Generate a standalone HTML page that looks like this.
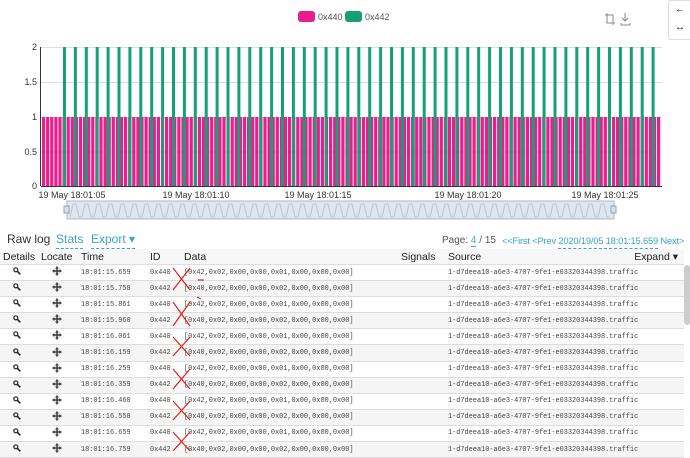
<!DOCTYPE html>
<html><head><meta charset="utf-8"><style>
body{margin:0;width:690px;height:451px;overflow:hidden;background:#fff;font-family:"Liberation Sans",sans-serif;position:relative}
.abs{position:absolute}
.lg{font-size:9px;color:#555}
table{border-collapse:collapse;position:absolute;left:0;top:249px;width:684px;font-size:11px;table-layout:fixed}
th{font-weight:normal;text-align:left;color:#222;height:15px;padding:0 0 0 3px;background:#f7f7f7;border-bottom:1px solid #ddd;font-size:10.5px;white-space:nowrap}
td{height:15.1px;padding:0 0 0 3px;border-bottom:1px solid #ddd;font-family:"Liberation Mono",monospace;font-size:6.9px;color:#444;white-space:nowrap;overflow:hidden}
tr:nth-child(even) td{background:#f5f5f5}
.lnk{color:#3aa3c9}
.dot{border-bottom:1px dashed #3aa3c9;padding-bottom:2px}
</style></head><body>
<div class="abs" style="left:298px;top:11px;width:17px;height:11px;background:#e91e8c;border-radius:3px"></div>
<div class="abs lg" style="left:318px;top:12px">0x440</div>
<div class="abs" style="left:345px;top:11px;width:17px;height:11px;background:#17a077;border-radius:3px"></div>
<div class="abs lg" style="left:365px;top:12px">0x442</div>
<svg class="abs" style="left:600px;top:10px" width="40" height="16" stroke="#888" fill="none" stroke-width="1">
<path d="M7 3 V13 H15 M5 5 H13 V15"/><path d="M25 3 V11 M22 8 L25 11 L28 8 M21 13 V15 H30 V13"/></svg>
<div class="abs" style="left:668px;top:0;width:22px;height:38px;border:1px solid #ddd;border-radius:3px;background:#fff;font-size:10px;text-align:center;line-height:18px">←<br>↔</div>
<svg class="abs" style="left:0;top:0" width="690" height="230">
<g stroke="#ddd" stroke-width="1"><line x1="41" y1="47.5" x2="662" y2="47.5"/><line x1="41" y1="82.5" x2="662" y2="82.5"/><line x1="41" y1="117.5" x2="662" y2="117.5"/><line x1="41" y1="152" x2="662" y2="152"/></g>
<g id="bars"></g>
<line x1="41" y1="186.5" x2="662" y2="186.5" stroke="#333"/>
<line x1="40.5" y1="47" x2="40.5" y2="186" stroke="#333"/>
<g fill="#333" font-size="9" font-family="Liberation Sans" text-anchor="end">
<text x="37" y="50">2</text><text x="37" y="85">1.5</text><text x="37" y="120">1</text><text x="37" y="155">0.5</text><text x="37" y="189">0</text></g>
<g fill="#333" font-size="9" font-family="Liberation Sans" text-anchor="middle">
<text x="72" y="198">19 May 18:01:05</text><text x="196" y="198">19 May 18:01:10</text><text x="318" y="198">19 May 18:01:15</text><text x="468" y="198">19 May 18:01:20</text><text x="605" y="198">19 May 18:01:25</text></g>
<rect x="67" y="201" width="547" height="18" fill="#dfe6ef" stroke="#aab8cc"/>
<path id="wave" fill="none" stroke="#b8c4d4" stroke-width="1"/>
<rect x="64" y="206" width="5" height="7" fill="#dde" stroke="#8aa"/><rect x="611" y="206" width="5" height="7" fill="#dde" stroke="#8aa"/>
</svg>
<script>
var g=document.getElementById('bars'),s='';
for(var x=42;x<660;x+=4.1){s+='<rect x="'+x.toFixed(1)+'" y="117" width="3.2" height="69" fill="#e91e8c"/>';}
for(var x=63;x<660;x+=10.9){s+='<rect x="'+x.toFixed(1)+'" y="47" width="3" height="139" fill="#17a077"/>';}
g.innerHTML=s;
var d='M70 217';for(var x=70;x<610;x+=12){d+=' L'+(x+3)+' 204 L'+(x+6)+' 204 L'+(x+9)+' 217 L'+(x+12)+' 217';}
document.getElementById('wave').setAttribute('d',d);
</script>
<div class="abs" style="left:7px;top:232px;font-size:12px;color:#333">Raw log</div>
<div class="abs lnk" style="left:56px;top:232px;font-size:12px"><span class="dot">Stats</span></div>
<div class="abs lnk" style="left:91px;top:232px;font-size:12px"><span class="dot">Export ▾</span></div>
<div class="abs" style="left:442px;top:235px;font-size:10px;color:#555">Page: <span class="lnk" style="border-bottom:1px solid #3aa3c9">4</span> / 15</div>
<div class="abs lnk" style="left:502px;top:235px;font-size:9.4px;white-space:nowrap;letter-spacing:-0.2px">&lt;&lt;First &lt;Prev <span class="dot">2020/19/05 18:01:15.659</span> Next&gt;</div>
<table>
<colgroup><col style="width:38px"><col style="width:40px"><col style="width:69px"><col style="width:34px"><col style="width:217px"><col style="width:47px"><col><col style="width:62px"></colgroup>
<tr><th>Details</th><th>Locate</th><th>Time</th><th>ID</th><th>Data</th><th>Signals</th><th>Source</th><th style="text-align:right;padding-right:6px">Expand ▾</th></tr>
<tbody id="tb"></tbody>
</table>
<div class="abs" style="left:684px;top:265px;width:6px;height:60px;background:#ccc;border-radius:3px"></div>
<script>
var t=['15.659','15.758','15.861','15.960','16.061','16.159','16.259','16.359','16.460','16.558','16.659','16.759'],h='';
var mag='<svg width="8" height="8" viewBox="0 0 8 8"><circle cx="2.8" cy="2.8" r="2" fill="none" stroke="#222" stroke-width="1.2"/><path d="M4.3 4.3 L7.3 7.3" stroke="#222" stroke-width="1.6"/></svg>';
var loc='<svg width="10" height="10" viewBox="0 0 10 10" fill="#444"><path d="M5 0 L7 2.5 H3 Z M5 10 L7 7.5 H3 Z M0 5 L2.5 3 V7 Z M10 5 L7.5 3 V7 Z"/><rect x="4.2" y="2" width="1.6" height="6"/><rect x="2" y="4.2" width="6" height="1.6"/></svg>';
for(var i=0;i<12;i++){var a=i%2==0;
h+='<tr><td style="padding-left:13px">'+mag+'</td><td style="padding-left:14px">'+loc+'</td><td>18:01:'+t[i]+'</td><td>'+(a?'0x440':'0x442')+'</td><td>['+(a?'0x42,0x02,0x00,0x00,0x01,0x00,0x00,0x00':'0x40,0x02,0x00,0x00,0x02,0x00,0x00,0x00')+']</td><td></td><td colspan="2">1-d7deea10-a6e3-4707-9fe1-e03320344398.traffic</td></tr>';}
document.getElementById('tb').innerHTML=h;
</script>
<svg class="abs" style="left:0;top:0" width="690" height="451" stroke="#e02020" stroke-width="1.2" fill="none">
<path d="M173 268 L190 290 M190 268 L173 290"/>
<path d="M173 302 L190 326 M190 302 L173 326"/>
<path d="M173 337 L190 356 M190 337 L173 356"/>
<path d="M173 369 L190 389 M190 369 L173 389"/>
<path d="M173 401 L190 420 M190 401 L173 420"/>
<path d="M173 432 L190 451 M190 432 L173 451"/>
<path d="M198 280 L204 280 M197 297 L201 299"/>
</svg>
</body></html>
